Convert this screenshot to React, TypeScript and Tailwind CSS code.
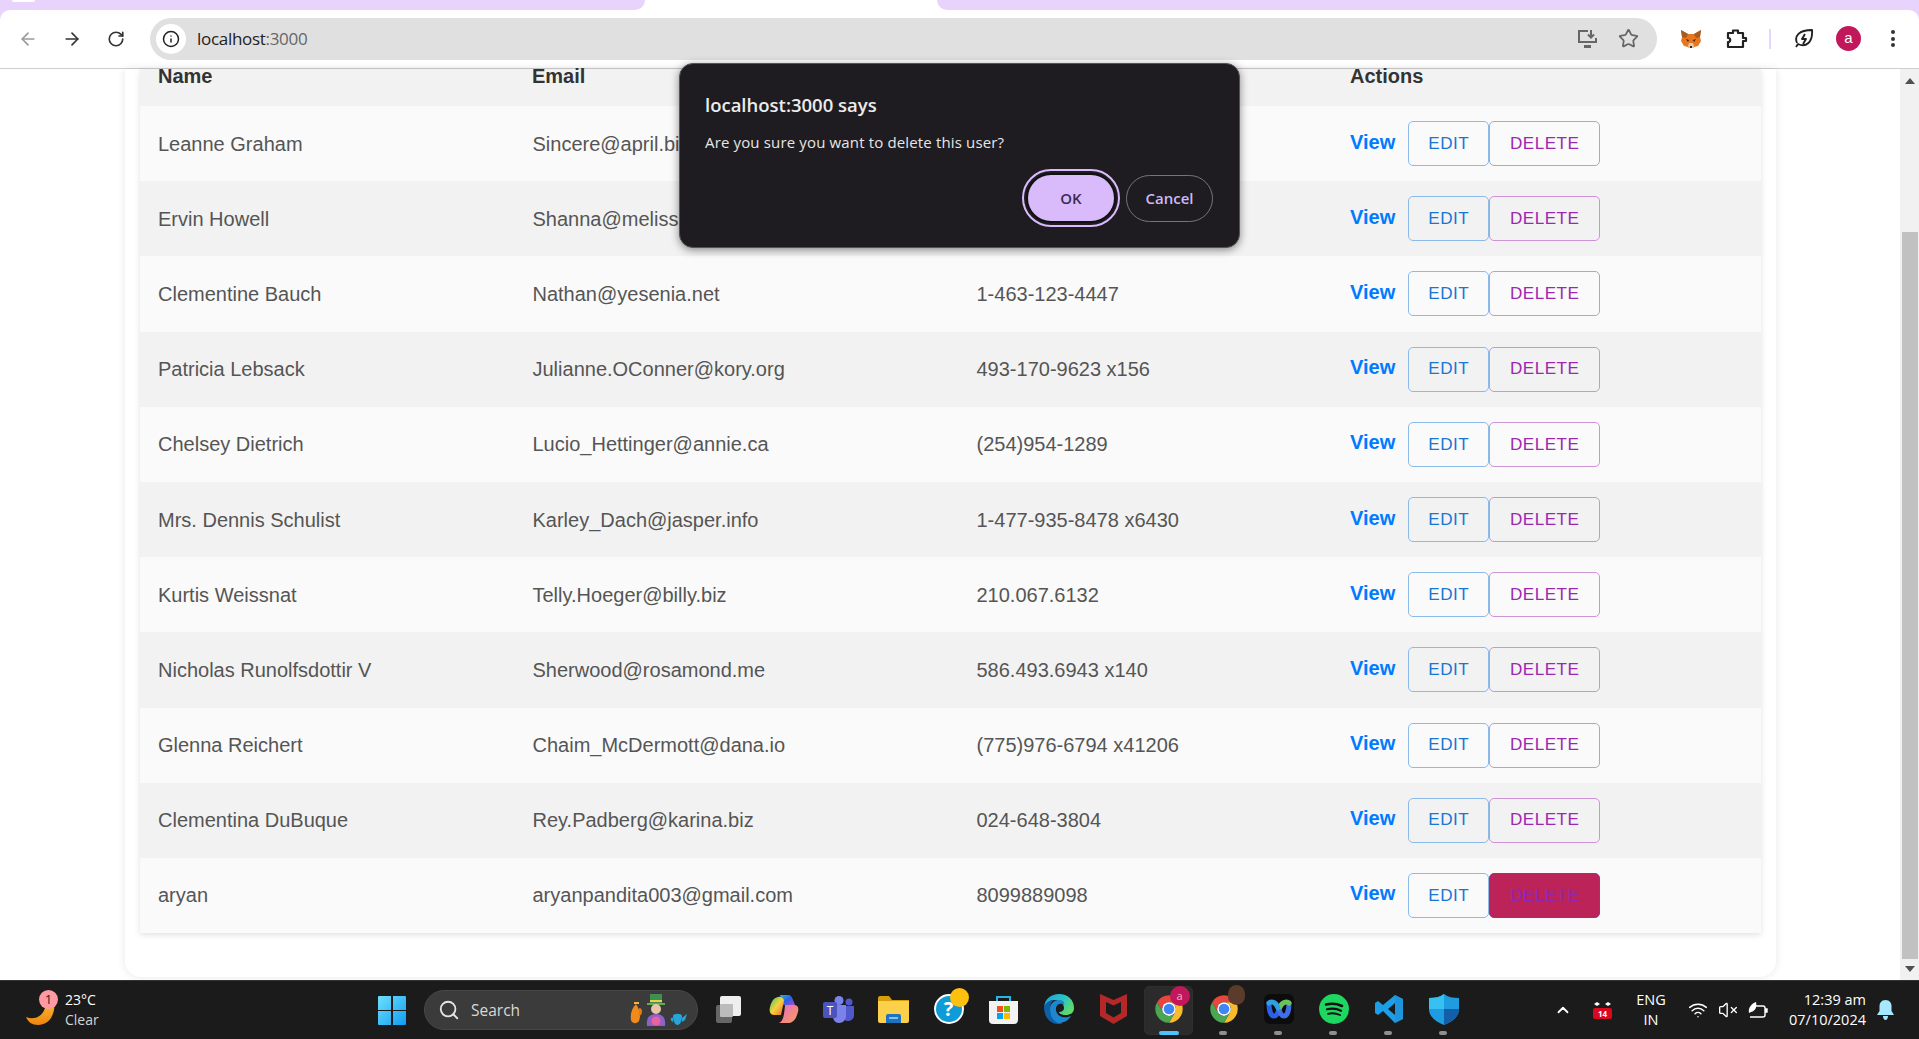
import React from "react";
import { ArrowLeft, ArrowRight, RotateCw, Info, Star, Search, ChevronUp, Wifi, VolumeX } from "lucide-react";

const users = [
  ["Leanne Graham", "Sincere@april.biz", "1-770-736-8031 x56442"],
  ["Ervin Howell", "Shanna@melissa.tv", "010-692-6593 x09125"],
  ["Clementine Bauch", "Nathan@yesenia.net", "1-463-123-4447"],
  ["Patricia Lebsack", "Julianne.OConner@kory.org", "493-170-9623 x156"],
  ["Chelsey Dietrich", "Lucio_Hettinger@annie.ca", "(254)954-1289"],
  ["Mrs. Dennis Schulist", "Karley_Dach@jasper.info", "1-477-935-8478 x6430"],
  ["Kurtis Weissnat", "Telly.Hoeger@billy.biz", "210.067.6132"],
  ["Nicholas Runolfsdottir V", "Sherwood@rosamond.me", "586.493.6943 x140"],
  ["Glenna Reichert", "Chaim_McDermott@dana.io", "(775)976-6794 x41206"],
  ["Clementina DuBuque", "Rey.Padberg@karina.biz", "024-648-3804"],
  ["aryan", "aryanpandita003@gmail.com", "8099889098"],
];

const Chrome = ({ size = 30 }: { size?: number }) => (
  <svg width={size} height={size} viewBox="0 0 48 48">
    <path d="M4.95 13A22 22 0 0 1 43.05 13H24A11 11 0 0 0 14.47 29.5Z" fill="#e8453c" />
    <path d="M43.05 13A22 22 0 0 1 24 46L33.53 29.5A11 11 0 0 0 24 13Z" fill="#f9bb2d" />
    <path d="M24 46A22 22 0 0 1 4.95 13L14.47 29.5A11 11 0 0 0 33.53 29.5Z" fill="#4aa651" />
    <circle cx="24" cy="24" r="11" fill="#fff" />
    <circle cx="24" cy="24" r="8.5" fill="#3f85f5" />
  </svg>
);

const Fox = () => (
  <svg width="22" height="20" viewBox="0 0 22 20">
    <path d="M1 1l7 4h6l7-4-1 7 1 4-3 5-4 1-1 1H9l-1-1-4-1-3-5 1-4z" fill="#e8761e" />
    <path d="M1 1l7 4-2 4-4-1zM21 1l-7 4 2 4 4-1z" fill="#a55b22" />
    <path d="M8 17l1-3h4l1 3-1 2H9z" fill="#e3c7a8" />
    <path d="M6 10l3 1-1 2zM16 10l-3 1 1 2z" fill="#33261b" />
    <path d="M10 17h2v2h-2z" fill="#2a2a2a" />
  </svg>
);

const Slot = ({ children, dot, active }: { children: React.ReactNode; dot?: boolean; active?: boolean }) => (
  <div className="relative flex h-[59px] w-[55px] items-center justify-center pb-[2px]">
    {active && <div className="absolute left-[3px] top-[5px] h-[49px] w-[49px] rounded-[5px] border border-[#2f2f2f] bg-[#2b2b2b]" />}
    <div className="relative flex items-center justify-center">{children}</div>
    {dot && <div className="absolute bottom-[5px] left-[23px] h-[4px] w-[8px] rounded-full bg-[#8f8f8f]" />}
    {active && <div className="absolute bottom-[5px] left-[18px] h-[4px] w-[20px] rounded-full bg-[#4cc2ff]" />}
  </div>
);

const Header = ["Name", "Email", "Phone", "Actions"];

export default function App() {
  return (
    <div className="relative flex h-[1039px] w-[1919px] flex-col overflow-hidden bg-white font-['Liberation_Sans',sans-serif]">
      {/* Tab strip */}
      <div className="relative flex h-[10px] shrink-0 bg-white">
        <div className="relative h-[10px] w-[645px] rounded-br-[10px] bg-[#e8d3fd]">
          <div className="absolute left-[12px] top-0 h-[2px] w-[23px] rounded-b-[3px] bg-white" />
        </div>
        <div className="w-[292px]" />
        <div className="h-[10px] flex-1 rounded-bl-[10px] bg-[#e8d3fd]" />
      </div>

      {/* Toolbar */}
      <div className="shrink-0 bg-[#e8d3fd]">
        <div className="flex h-[59px] items-center rounded-t-[10px] border-b border-[#cfcfcf] bg-white pb-[1px]">
          <ArrowLeft className="ml-[18px] text-[#9a9a9a]" size={20} strokeWidth={2} />
          <ArrowRight className="ml-[24px] text-[#333]" size={20} strokeWidth={2} />
          <RotateCw className="ml-[25px] text-[#333]" size={18} strokeWidth={2.2} />
          <div className="ml-[25px] flex h-[42px] w-[1507px] items-center rounded-full bg-[#e0e0e0] pl-[6px] pr-[18px]">
            <div className="flex h-[30px] w-[30px] items-center justify-center rounded-full bg-white">
              <Info size={18} strokeWidth={2} className="text-[#222]" />
            </div>
            <span className="ml-[11px] font-['Open_Sans',sans-serif] text-[17px] tracking-[-0.3px] text-[#222]">
              localhost<span className="text-[#666]">:3000</span>
            </span>
            <div className="flex-1" />
            <svg width="21" height="19" viewBox="0 0 21 19" fill="none" stroke="#666" strokeWidth="2">
              <path d="M11 2H2v11h17V9" />
              <path d="M7 17.5h7" strokeWidth="3" />
              <path d="M14 1v7M11 5.5l3 3 3-3" />
            </svg>
            <Star size={21} strokeWidth={2} className="ml-[20px] text-[#666]" />
          </div>
          <div className="ml-[23px]"><Fox /></div>
          <svg className="ml-[24px]" width="22" height="20" viewBox="0 0 22 20" fill="none" stroke="#222" strokeWidth="2.2" strokeLinejoin="round">
            <path d="M2 4h5V1.5h5V4h5v5h3v3h-3v6H2v-5c3 0 3-4 0-4z" />
          </svg>
          <div className="ml-[21px] h-[20px] w-[2px] bg-[#e8d5fb]" />
          <svg className="ml-[23px]" width="20" height="21" viewBox="0 0 20 21" fill="none" stroke="#222" strokeWidth="1.9" strokeLinejoin="round">
            <path d="M3 15C0 8 5 2 18 2c1 12-6 18-14 14l-2 3" />
            <path d="M11 6l-3 5h4l-3 5" />
          </svg>
          <div className="ml-[22px] flex h-[25px] w-[25px] items-center justify-center rounded-full bg-[#c2185b] text-[15px] text-white">a</div>
          <div className="ml-[30px] flex h-[17px] flex-col justify-between">
            <span className="h-[4px] w-[4px] rounded-full bg-[#333]" />
            <span className="h-[4px] w-[4px] rounded-full bg-[#333]" />
            <span className="h-[4px] w-[4px] rounded-full bg-[#333]" />
          </div>
        </div>
      </div>

      {/* Page */}
      <div className="flex min-h-0 flex-1">
        <div className="min-w-0 flex-1 pb-[3px] pl-[125px] pr-[124px]">
          <div className="h-full rounded-b-[16px] bg-white px-[15px] shadow-[0_0_8px_rgba(0,0,0,0.1)]">
            <div className="shadow-[0_2px_6px_rgba(0,0,0,0.12)]">
              <div className="grid h-[37px] grid-cols-[374px_444px_374px_429px] bg-[#f2f2f2]">
                {Header.map((h) => (
                  <div key={h} className="pl-[18px] text-[20px] font-bold leading-[15px] text-[#333]">{h}</div>
                ))}
              </div>
              {users.map((u, i) => (
                <div key={u[0]} className={`grid h-[75.2px] grid-cols-[374px_444px_374px_429px] items-center text-[20px] text-[#555] ${i % 2 === 0 ? "bg-[#fafafa]" : "bg-[#f2f2f2]"}`}>
                  <div className="pl-[18px]">{u[0]}</div>
                  <div className="pl-[18.500px]">{u[1]}</div>
                  <div className="pl-[18.500px]">{u[2]}</div>
                  <div className="flex items-center pl-[18px]">
                    <span className="mb-[4px] font-bold text-[#007bff]">View</span>
                    <div className="ml-[13px] flex h-[45px] w-[81px] items-center justify-center rounded-[5px] border border-[#8cbae8] text-[17.1px] tracking-[0.49px] text-[#1976d2]">EDIT</div>
                    <div className={`flex h-[45px] w-[111px] items-center justify-center rounded-[5px] border text-[17.1px] tracking-[0.49px] ${i === 10 ? "border-[#9c27b0] bg-[#bb2359] text-[#8e27b8]" : "border-[#cd93d7] text-[#9c27b0]"}`}>DELETE</div>
                  </div>
                </div>
              ))}
            </div>
          </div>
        </div>
        {/* Scrollbar */}
        <div className="flex w-[19px] shrink-0 flex-col items-center bg-[#f1f1f1] pl-[1px]">
          <div className="mt-[9px] h-0 w-0 border-x-[5px] border-b-[6px] border-x-transparent border-b-[#505050]" />
          <div className="mt-[148px] h-[727px] w-[16px] bg-[#c1c1c1]" />
          <div className="mt-[7px] h-0 w-0 border-x-[5px] border-t-[6px] border-x-transparent border-t-[#505050]" />
        </div>
      </div>

      {/* Taskbar */}
      <div className="flex h-[59px] shrink-0 items-center border-t border-[#333] bg-[#1b1b1b] font-['Open_Sans',sans-serif] text-white">
        <div className="flex w-[378px] items-center pl-[26px]">
          <div className="relative h-[30px] w-[30px]">
            <svg width="30" height="30" viewBox="0 0 30 30">
              <defs>
                <linearGradient id="moon" x1="0" y1="0" x2="0" y2="1">
                  <stop offset="0" stopColor="#fdbb2d" />
                  <stop offset="1" stopColor="#ee8411" />
                </linearGradient>
              </defs>
              <path d="M28 6c2 12-4 24-16 24C6 30 2 27 0 22c10 4 20-2 20-16z" fill="url(#moon)" />
            </svg>
            <div className="absolute left-[13px] top-[-5px] flex h-[19px] w-[19px] items-center justify-center rounded-full bg-[#ff9aa2] text-[13px] text-[#222]">1</div>
          </div>
          <div className="ml-[9px] flex flex-col text-[14px] leading-[20px]">
            <span>23°C</span>
            <span className="text-[#d5d5d5]">Clear</span>
          </div>
        </div>
        <svg className="shrink-0" width="28" height="29" viewBox="0 0 28 29">
          <defs>
            <linearGradient id="win" x1="0" y1="0" x2="1" y2="1">
              <stop offset="0" stopColor="#6fe0fa" />
              <stop offset="1" stopColor="#0f9cf5" />
            </linearGradient>
          </defs>
          <path d="M0 1a1 1 0 0 1 1-1h12v14H0zM15 0h12a1 1 0 0 1 1 1v13H15zM0 15h13v14H1a1 1 0 0 1-1-1zM15 15h13v13a1 1 0 0 1-1 1H15z" fill="url(#win)" />
        </svg>
        <div className="ml-[18px] flex h-[40px] w-[274px] shrink-0 items-center rounded-full border border-[#484848] bg-[#3b3b3b] pl-[13px]">
          <Search size={22} strokeWidth={2} className="text-[#e4e4e4]" />
          <span className="ml-[11px] mt-[1px] text-[15.5px] text-[#d8d8d8]">Search</span>
          <svg className="ml-[110px] shrink-0" width="58" height="32" viewBox="0 0 58 32">
            <path d="M6 10c-4 4-6 10-5 16 1 4 6 4 8 1 2-5 1-11-3-17z" fill="#f08a1a" />
            <path d="M9 14c3 0 4 3 2 7l-2 1z" fill="#e67a10" />
            <path d="M4 8h5v2H4z" fill="#f9b23c" />
            <path d="M20 0h12v9H20z" fill="#3f8f50" />
            <path d="M17 9h18v2H17z" fill="#5fae52" />
            <path d="M20 6h12v2H20z" fill="#e8d04a" />
            <circle cx="26" cy="15" r="5" fill="#e9c5a5" />
            <path d="M17 32c-1-9 3-12 9-12s10 3 9 12z" fill="#8a63c9" />
            <circle cx="26" cy="27" r="4.500" fill="#ec5fa0" />
            <path d="M43 22c0-3 9-3 9 0 0 5-2 9-4.500 9S43 27 43 22z" fill="#27a5d8" />
            <path d="M52 24l5-4-2 6-3 2zM43 24c-3-1-3 3 0 4z" fill="#27a5d8" />
          </svg>
        </div>
        <div className="ml-[3px] flex shrink-0">
          <Slot>
            <div className="relative h-[27px] w-[25px]">
              <div className="absolute bottom-0 left-0 h-[18px] w-[16px] rounded-[2px] bg-[#666]" />
              <div className="absolute right-0 top-0 h-[20px] w-[21px] rounded-[2px] bg-[#eee]" />
              <div className="absolute left-[4px] top-[8px] h-[13px] w-[13px] rounded-[1px] bg-[#bbb]" />
            </div>
          </Slot>
          <Slot>
            <svg width="30" height="28" viewBox="0 0 30 28">
              <defs>
                <linearGradient id="cp1" x1="0" y1="0" x2="1" y2="1">
                  <stop offset="0" stopColor="#20b4e8" />
                  <stop offset="0.5" stopColor="#2e5fe0" />
                  <stop offset="1" stopColor="#b04fd0" />
                </linearGradient>
                <linearGradient id="cp2" x1="0" y1="0" x2="1" y2="1">
                  <stop offset="0" stopColor="#36c46c" />
                  <stop offset="0.5" stopColor="#f5d23c" />
                  <stop offset="1" stopColor="#f0682f" />
                </linearGradient>
                <linearGradient id="cp3" x1="0" y1="0" x2="1" y2="1">
                  <stop offset="0" stopColor="#e86ac0" />
                  <stop offset="1" stopColor="#f7a05a" />
                </linearGradient>
              </defs>
              <path d="M11 0h8c3 0 4 2 5 5l2 5H14z" fill="url(#cp1)" />
              <path d="M9 2C5 3 3 5 1 12c-1 4 0 8 4 8h7l3-14c0-3-3-5-6-4z" fill="url(#cp2)" />
              <path d="M16 10h9c4 0 5 3 4 7-2 7-4 10-9 11H10c4-2 5-6 6-18z" fill="url(#cp3)" />
            </svg>
          </Slot>
          <Slot>
            <svg width="31" height="27" viewBox="0 0 31 27">
              <circle cx="16" cy="4.5" r="4.5" fill="#7b83eb" />
              <circle cx="26" cy="6" r="3.5" fill="#5059c9" />
              <path d="M20 10h11v9c0 4-3 6-6 6s-5-2-5-5z" fill="#5059c9" />
              <path d="M10 9h13v11c0 4-3 7-7 7s-6-3-6-7z" fill="#7b83eb" />
              <rect x="0" y="6" width="14" height="16" rx="2" fill="#4b53bc" />
              <text x="7" y="19" textAnchor="middle" fontSize="12" fill="#fff" fontFamily="Open Sans">T</text>
            </svg>
          </Slot>
          <Slot>
            <svg width="31" height="27" viewBox="0 0 31 27">
              <path d="M0 2a2 2 0 0 1 2-2h9l3 4h17v6H0z" fill="#d69e0b" />
              <path d="M0 5h31v20a2 2 0 0 1-2 2H2a2 2 0 0 1-2-2z" fill="#fbd04a" />
              <path d="M8 20a2 2 0 0 1 2-2h11a2 2 0 0 1 2 2v7H8z" fill="#1c74c0" />
              <path d="M11 21h9v2h-9z" fill="#7cc3f0" />
            </svg>
          </Slot>
          <Slot>
            <div className="relative flex h-[30px] w-[30px] items-center justify-center rounded-full border-2 border-white bg-[#0f9ad8] text-[20px] font-bold text-white">
              ?
              <div className="absolute right-[-7px] top-[-8px] h-[19px] w-[19px] rounded-full bg-[#fdc00f]" />
            </div>
          </Slot>
          <Slot>
            <svg width="29" height="29" viewBox="0 0 29 29">
              <path d="M8 6V2h13v4" fill="none" stroke="#27b4e8" strokeWidth="2" />
              <path d="M0 6h29v19a4 4 0 0 1-4 4H4a4 4 0 0 1-4-4z" fill="#f2f2f2" />
              <rect x="8" y="11" width="6" height="6" fill="#f25022" />
              <rect x="15" y="11" width="6" height="6" fill="#7fba00" />
              <rect x="8" y="18" width="6" height="6" fill="#00a4ef" />
              <rect x="15" y="18" width="6" height="6" fill="#ffb900" />
            </svg>
          </Slot>
          <Slot>
            <svg width="30" height="30" viewBox="0 0 30 30">
              <defs>
                <linearGradient id="edge" x1="0" y1="0" x2="1" y2="0.6">
                  <stop offset="0" stopColor="#1b9de2" />
                  <stop offset="0.6" stopColor="#2ec4c0" />
                  <stop offset="1" stopColor="#5fdc64" />
                </linearGradient>
              </defs>
              <path d="M15 0c9 0 15 6 15 14 0 5-4 7-8 7-5 0-7-2-7-3 2 0 5-1 5-4 0-5-5-8-10-8C6 6 2 9 0 13 1 5 7 0 15 0z" fill="url(#edge)" />
              <path d="M0 13c2-4 6-7 10-7-3 2-4 5-4 9 0 6 5 13 13 14-2 1-3 1-5 1C6 30 0 23 0 13z" fill="#0e5ea8" />
              <path d="M6 15c0-5 4-9 9-9 4 0 6 2 5 5-2-2-7-2-8 3-1 6 6 12 15 8-3 5-8 7-12 7C9 28 6 21 6 15z" fill="#1a87d0" />
            </svg>
          </Slot>
          <Slot dot={false}>
            <svg width="27" height="30" viewBox="0 0 27 30">
              <path d="M0 0l13.5 6L27 0v22l-13.500 8L0 22z" fill="#b5282a" />
              <path d="M6 8l7.500 3.500L21 8v11l-7.500 4.500L6 19z" fill="#1b1b1b" />
            </svg>
          </Slot>
          <Slot active>
            <Chrome />
            <div className="absolute right-[-6px] top-[-8px] flex h-[20px] w-[20px] items-center justify-center rounded-full bg-[#c2185b] text-[11px] text-[#f4b6cf]">a</div>
          </Slot>
          <Slot dot>
            <Chrome />
            <div className="absolute right-[-6px] top-[-9px] h-[20px] w-[17px] rounded-full bg-[#5a3b2c]" />
          </Slot>
          <Slot dot>
            <div className="flex h-[30px] w-[30px] items-center justify-center rounded-[6px] bg-[#0c0c0c]">
              <svg width="26" height="20" viewBox="0 0 26 20" fill="none" strokeWidth="5" strokeLinecap="round">
                <path d="M3 4c0 8 2 13 5 13s5-5 5-8" stroke="#2c5fe8" />
                <path d="M13 9c0 3 2 8 5 8s5-5 5-13" stroke="#3f6fe8" />
                <path d="M23 4c-2-2-7-1-9 4" stroke="#6cc25a" />
                <path d="M3 4c3-2 7-1 9 5" stroke="#2f9fe0" />
              </svg>
            </div>
          </Slot>
          <Slot dot>
            <svg width="30" height="30" viewBox="0 0 30 30">
              <circle cx="15" cy="15" r="15" fill="#1ed760" />
              <g fill="none" stroke="#111" strokeLinecap="round">
                <path d="M7 10.500c6-1.500 11-1 16 1.500" strokeWidth="2.600" />
                <path d="M8 15.300c5-1.300 10-.8 14 1.400" strokeWidth="2.200" />
                <path d="M9 19.800c4-1 8-.7 12 1.200" strokeWidth="1.900" />
              </g>
            </svg>
          </Slot>
          <Slot dot>
            <svg width="30" height="30" viewBox="0 0 30 30">
              <path d="M21 1l8 4v20l-8 4-12-12-5 4-3-2v-10l3-2 5 4zM21 9l-7 6 7 6z" fill="#1a9fe8" fillRule="evenodd" />
              <path d="M21 1l8 4v20l-8 4z" fill="#1f8ed4" fillOpacity="0.6" />
            </svg>
          </Slot>
          <Slot dot>
            <svg width="30" height="31" viewBox="0 0 30 31">
              <path d="M15 0c4 3 9 4 15 4v11c0 8-7 13-15 16C7 28 0 23 0 15V4c6 0 11-1 15-4z" fill="#1f9be0" />
              <path d="M15 0v15H0V4c6 0 11-1 15-4z" fill="#37c1f0" />
              <path d="M15 15h15c0 8-7 13-15 16z" fill="#125ea8" />
            </svg>
          </Slot>
        </div>

        {/* System tray */}
        <ChevronUp className="ml-[83px] shrink-0 text-white" size={18} strokeWidth={2.4} />
        <svg className="ml-[21px] shrink-0" width="19" height="18" viewBox="0 0 19 18">
          <path d="M1 3l3-2 3 2-3 2zM12 3l3-2 3 2-3 2z" fill="#fff" />
          <rect x="0" y="7" width="19" height="11" rx="2" fill="#d9071f" />
          <text x="9.500" y="16" textAnchor="middle" fontSize="8" fontWeight="700" fill="#fff" fontFamily="Open Sans">14</text>
        </svg>
        <div className="ml-[19px] flex w-[40px] shrink-0 flex-col items-center text-[14.5px] leading-[20px]">
          <span>ENG</span>
          <span>IN</span>
        </div>
        <Wifi className="ml-[17px] shrink-0" size={20} strokeWidth={1.8} />
        <VolumeX className="ml-[10px] shrink-0" size={20} strokeWidth={1.6} />
        <svg className="ml-[10px] shrink-0" width="20" height="17" viewBox="0 0 20 17" fill="none" stroke="#fff" strokeWidth="1.400">
          <path d="M8 4h7a2 2 0 0 1 2 2v7a2 2 0 0 1-2 2H2" />
          <path d="M17 7h2v3h-2" fill="#fff" />
          <path d="M1 11C0 6 3 2 8 0c1 4 0 9-5 10z" fill="#fff" stroke="none" />
        </svg>
        <div className="w-[98px] shrink-0 text-right text-[14.5px] leading-[20px]">
          <div>12:39 am</div>
          <div>07/10/2024</div>
        </div>
        <svg className="ml-[11px] shrink-0" width="17" height="20" viewBox="0 0 17 20">
          <path d="M8.500 0c4 0 6 3 6 6v5l2.500 4H0l2.500-4V6c0-3 2-6 6-6z" fill="#a5e8ff" />
          <path d="M6 16h5c0 2-1 4-2.500 4S6 18 6 16z" fill="#a5e8ff" />
        </svg>
      </div>

      {/* Native confirm dialog */}
      <div className="absolute left-[679px] top-[63px] flex h-[185px] w-[561px] flex-col rounded-[14px] border border-[#55535a] bg-[#1e1c21] pl-[25px] pr-[26px] font-['Open_Sans',sans-serif] shadow-[0_2px_8px_rgba(0,0,0,0.45)]">
        <div className="mt-[28px] text-[18.5px] font-semibold leading-[26px] text-[#ececec]">localhost:3000 says</div>
        <div className="mt-[13px] text-[15px] leading-[22px] tracking-[0.15px] text-[#e6e6e6]">Are you sure you want to delete this user?</div>
        <div className="mt-[16px] flex items-center justify-end">
          <div className="rounded-full border-[2px] border-[#d9bbfb] p-[2px]">
            <div className="flex h-[50px] w-[90px] items-center justify-center rounded-full border-[2px] border-[#111] bg-[#d9bbfb] text-[15px] font-semibold text-[#3a2a55]">OK</div>
          </div>
          <div className="ml-[6px] flex h-[47px] w-[87px] items-center justify-center rounded-full border border-[#77737c] text-[15px] font-semibold text-[#cdb8f8]">Cancel</div>
        </div>
      </div>
    </div>
  );
}
